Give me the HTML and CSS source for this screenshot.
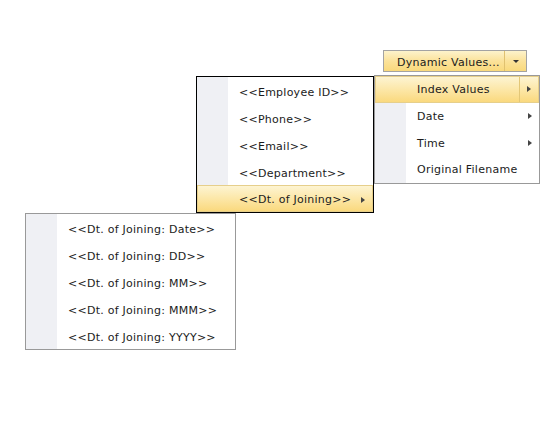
FILE: index.html
```html
<!DOCTYPE html>
<html lang="en">
<head>
    <meta charset="UTF-8">
    <title>Dynamic Values</title>
    <link rel="stylesheet" href="styles.css">
</head>
<body>
    <div class="stage">
        <div class="split-button">
            <span class="split-label">Dynamic Values...</span>
            <span class="split-drop"><span class="arrow-down"></span></span>
        </div>

        <!-- top level menu -->
        <ul class="menu menu-root">
            <li class="item active split"><span class="text">Index Values</span><span class="sub"><span class="arrow-right"></span></span></li>
            <li class="item"><span class="text">Date</span><span class="sub"><span class="arrow-right"></span></span></li>
            <li class="item"><span class="text">Time</span><span class="sub"><span class="arrow-right"></span></span></li>
            <li class="item"><span class="text">Original Filename</span></li>
        </ul>

        <!-- index values submenu -->
        <ul class="menu menu-index">
            <li class="item"><span class="text">&lt;&lt;Employee ID&gt;&gt;</span></li>
            <li class="item"><span class="text">&lt;&lt;Phone&gt;&gt;</span></li>
            <li class="item"><span class="text">&lt;&lt;Email&gt;&gt;</span></li>
            <li class="item"><span class="text">&lt;&lt;Department&gt;&gt;</span></li>
            <li class="item active"><span class="text">&lt;&lt;Dt. of Joining&gt;&gt;</span><span class="sub"><span class="arrow-right"></span></span></li>
        </ul>

        <!-- date parts submenu -->
        <ul class="menu menu-date">
            <li class="item"><span class="text">&lt;&lt;Dt. of Joining: Date&gt;&gt;</span></li>
            <li class="item"><span class="text">&lt;&lt;Dt. of Joining: DD&gt;&gt;</span></li>
            <li class="item"><span class="text">&lt;&lt;Dt. of Joining: MM&gt;&gt;</span></li>
            <li class="item"><span class="text">&lt;&lt;Dt. of Joining: MMM&gt;&gt;</span></li>
            <li class="item"><span class="text">&lt;&lt;Dt. of Joining: YYYY&gt;&gt;</span></li>
        </ul>
    </div>
</body>
</html>
```

FILE: styles.css
```css
body {
    margin: 0;
    background-color: #ffffff;
    font-family: 'DejaVu Sans', Verdana, sans-serif;
    font-size: 11px;
    letter-spacing: 0.25px;
    color: #1b1b1b;
}

.stage {
    position: relative;
    width: 544px;
    height: 444px;
    padding: 50px 0 0 383px;
    box-sizing: border-box;
}

.split-button {
    display: flex;
    width: 144px;
    height: 22px;
    box-sizing: border-box;
    border: 1px solid #a3a3a3;
    background: linear-gradient(#fdf3cc, #fbe29a 50%, #f9d97c);
}

.split-label {
    flex: 1;
    line-height: 20px;
    padding: 2px 0 0 13px;
}

.split-drop {
    width: 21px;
    border-left: 1px solid #e0c170;
    display: flex;
    align-items: center;
    justify-content: center;
}

.arrow-down {
    width: 0;
    height: 0;
    border-left: 3px solid transparent;
    border-right: 3px solid transparent;
    border-top: 3px solid #333333;
}

.menu {
    position: absolute;
    margin: 0;
    padding: 0;
    list-style: none;
    background: linear-gradient(90deg, #eff0f4 31px, #ffffff 31px);
    border: 1px solid #999999;
}

.menu-root {
    left: 374px;
    top: 75px;
    width: 164px;
}

.menu-index {
    left: 196px;
    top: 76px;
    width: 176px;
    border-color: #000000;
}

.menu-date {
    left: 25px;
    top: 213px;
    width: 209px;
}

.item {
    display: flex;
    align-items: center;
    height: 27px;
    box-sizing: border-box;
    padding: 3px 0 0 42px;
}

.menu-root .item {
    height: 26.67px;
    padding-top: 1px;
}

.item .text {
    flex: 1;
}

.item.active {
    background: linear-gradient(#fdf4d2, #fce7a8 50%, #fad97e);
    border: 1px solid #e6cf8b;
    padding: 2px 0 0 41px;
}

.menu-root .item.active {
    padding-top: 0;
}

.sub {
    width: 18px;
    align-self: stretch;
    display: flex;
    align-items: center;
    justify-content: center;
}

.split .sub {
    border-left: 1px solid #e3c777;
}

.arrow-right {
    width: 0;
    height: 0;
    border-top: 3.5px solid transparent;
    border-bottom: 3.5px solid transparent;
    border-left: 4px solid #444444;
}
```
